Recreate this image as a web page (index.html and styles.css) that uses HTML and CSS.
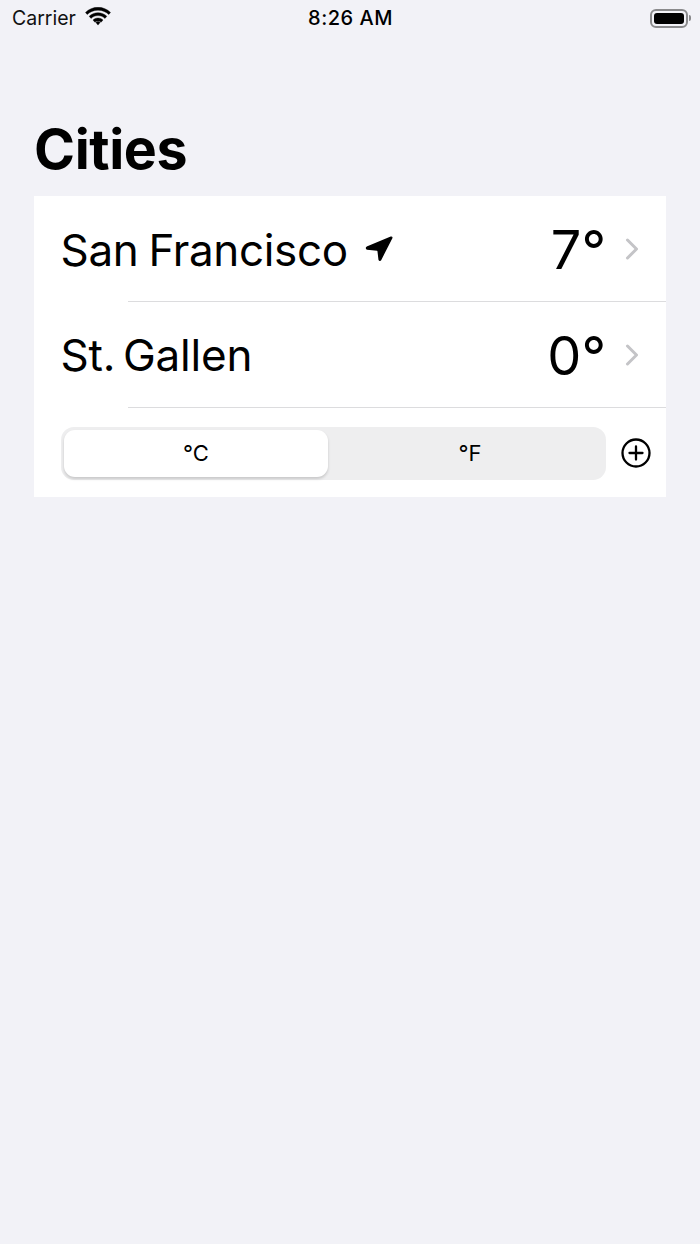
FILE: index.html
```html
<!DOCTYPE html>
<html lang="en">
<head>
  <meta charset="UTF-8" />
  <title>Cities</title>
  <link rel="stylesheet" href="styles.css">
</head>
<body>
  <!-- Status bar -->
  <div class="status-bar">
    <div class="status-left">
      <span class="carrier">Carrier</span>
      <svg class="wifi" width="26" height="19" viewBox="0 0 26 19">
        <path d="M13 3.200c4.400 0 8.100 1.700 10.800 4.300l1.700-2.100C22.300 2.300 17.900.3 13 .3S3.700 2.300.5 5.400l1.700 2.100C4.900 4.900 8.600 3.200 13 3.200z"/>
        <path d="M13 8.600c2.900 0 5.200 1.100 7 2.800l1.800-2.100C19.500 7.100 16.400 5.700 13 5.700S6.500 7.100 4.200 9.300L6 11.400c1.800-1.700 4.100-2.800 7-2.800z"/>
        <path d="M13 11c-2 0-3.700.8-5 2l1.900 2.200c.8-.7 1.900-1.200 3.100-1.200s2.300.5 3.100 1.200L18 13c-1.300-1.200-3-2-5-2z"/>
        <path d="M13 14.600c-.9 0-1.500.3-2.100.8l2.100 2.700 2.100-2.700c-.6-.5-1.200-.8-2.100-.8z"/>
      </svg>
    </div>
    <span class="clock">8:26 AM</span>
    <div class="battery">
      <div class="battery-body"><div class="battery-fill"></div></div>
      <div class="battery-cap"></div>
    </div>
  </div>

  <h1 class="title">Cities</h1>

  <div class="card">
    <div class="city-row">
      <span class="city-name">San Francisco</span>
      <svg class="location" width="30" height="30" viewBox="0 0 30 30">
        <path d="M3 13.300 27 3.300c.5-.2.900.2.700.7L16.500 25.800c-.3.600-1.200.5-1.300-.2l-1-8.500c-.1-.6-.5-1-1.100-1L3.200 15c-.8-.1-.9-1.300-.2-1.700z"/>
      </svg>
      <span class="temp">7°</span>
      <svg class="chevron" width="14" height="22" viewBox="0 0 14 22">
        <path d="M2.500 2 11.500 11 2.500 20"/>
      </svg>
    </div>
    <div class="city-row">
      <span class="city-name city-name-tight">St. Gallen</span>
      <span class="temp">0°</span>
      <svg class="chevron" width="14" height="22" viewBox="0 0 14 22">
        <path d="M2.500 2 11.500 11 2.500 20"/>
      </svg>
    </div>
    <div class="controls">
      <div class="segmented">
        <div class="segment segment-active">°C</div>
        <div class="segment">°F</div>
      </div>
      <svg class="add" width="30" height="30" viewBox="0 0 30 30">
        <circle cx="15" cy="15" r="13.500"/>
        <path d="M15 8.500v13M8.500 15h13"/>
      </svg>
    </div>
  </div>
</body>
</html>
```
FILE: styles.css
```css
:root {
  --page-bg: #f2f2f7;
  --line: #dcdcde;
  --segment-bg: #eeeeef;
}

* {
  box-sizing: border-box;
}

body {
  margin: 0;
  min-height: 1244px;
  background-color: var(--page-bg);
  font-family: Inter, 'Liberation Sans', sans-serif;
  color: #000;
}

.status-bar {
  display: grid;
  grid-template-columns: 1fr auto 1fr;
  align-items: center;
  height: 36px;
  padding: 0 9px 0 12px;
}

.status-left {
  display: flex;
  align-items: center;
  gap: 9px;
}

.carrier {
  font-size: 19.500px;
  color: #111;
}

.wifi {
  margin-top: -3px;
  stroke: #000;
  stroke-width: 0.4;
}

.clock {
  font-size: 20px;
  font-weight: 500;
  letter-spacing: 0.5px;
  margin-left: -2px;
}

.battery {
  display: flex;
  align-items: center;
  justify-content: flex-end;
  gap: 1px;
}

.battery-body {
  width: 38px;
  height: 19px;
  padding: 2px;
  border: 2px solid #8a8a8c;
  border-radius: 6px;
}

.battery-fill {
  height: 100%;
  background: #000;
  border-radius: 3px;
}

.battery-cap {
  width: 2px;
  height: 6px;
  background: #8a8a8c;
  border-radius: 0 2px 2px 0;
}

.title {
  margin: 0;
  padding: 80px 0 0 34px;
  height: 160px;
  font-size: 55.500px;
  line-height: 66px;
  font-weight: 700;
  letter-spacing: -0.4px;
}

.card {
  margin: 0 34px;
  background: #fff;
}

.city-row {
  position: relative;
  display: flex;
  align-items: center;
  height: 106px;
  padding: 0 27px 0 26.500px;
}

.city-row::after {
  content: "";
  position: absolute;
  left: 94px;
  right: 0;
  bottom: 0;
  height: 1px;
  background: var(--line);
}

.city-name {
  font-size: 44px;
  letter-spacing: -0.35px;
  word-spacing: -2px;
  padding-top: 1px;
}

.city-name-tight {
  padding-top: 0;
  letter-spacing: -0.2px;
  word-spacing: -4.500px;
}

.location {
  margin-left: 16px;
  fill: #000;
  stroke: #000;
  stroke-width: 1.500;
  stroke-linejoin: round;
}

.temp {
  margin-left: auto;
  font-size: 54px;
  font-weight: 400;
}

.chevron {
  margin-left: 19px;
  fill: none;
  stroke: #c4c4c7;
  stroke-width: 3;
  stroke-linecap: round;
  stroke-linejoin: round;
}

.controls {
  display: flex;
  align-items: center;
  gap: 15px;
  height: 89px;
  padding: 2px 15px 0 27px;
}

.segmented {
  display: flex;
  flex: 1;
  gap: 6px;
  height: 53px;
  padding: 3px 0 3px 3px;
  background: var(--segment-bg);
  border-radius: 13px;
}

.segment {
  display: flex;
  flex: 1;
  align-items: center;
  justify-content: center;
  padding-bottom: 1px;
  font-size: 22px;
}

.segment-active {
  flex: 0 0 264px;
  background: #fff;
  border-radius: 11px;
  box-shadow: 0 2px 3px rgba(0, 0, 0, 0.16);
}

.add {
  margin-top: -1px;
  fill: none;
  stroke: #000;
  stroke-width: 2.300;
  stroke-linecap: round;
}
```
